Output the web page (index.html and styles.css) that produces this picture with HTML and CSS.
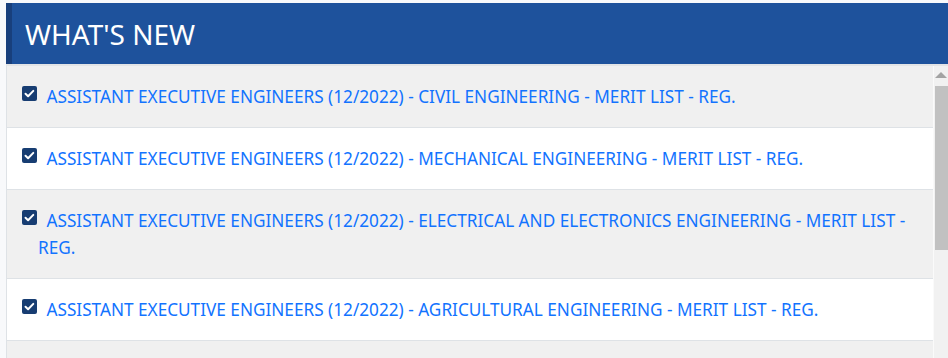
FILE: index.html
```html
<!DOCTYPE html>
<html>
<head>
    <meta charset="UTF-8">
    <title>What's New</title>
    <link rel="stylesheet" href="styles.css">
</head>
<body>
<div id="news">
    <div class="head"><h2>WHAT'S NEW</h2></div>
    <div class="body">
        <ul class="list">
            <li><a href="#"><svg class="chk" viewBox="0 0 15 15"><rect width="15" height="15" rx="2"/><path d="M3.5 7.8l2.6 2.5 5.2-5.4"/></svg> ASSISTANT EXECUTIVE ENGINEERS (12/2022) - CIVIL ENGINEERING - MERIT LIST - REG.</a></li>
            <li><a href="#"><svg class="chk" viewBox="0 0 15 15"><rect width="15" height="15" rx="2"/><path d="M3.5 7.8l2.6 2.5 5.2-5.4"/></svg> ASSISTANT EXECUTIVE ENGINEERS (12/2022) - MECHANICAL ENGINEERING - MERIT LIST - REG.</a></li>
            <li><a href="#"><svg class="chk" viewBox="0 0 15 15"><rect width="15" height="15" rx="2"/><path d="M3.5 7.8l2.6 2.5 5.2-5.4"/></svg> ASSISTANT EXECUTIVE ENGINEERS (12/2022) - ELECTRICAL AND ELECTRONICS ENGINEERING - MERIT LIST - REG.</a></li>
            <li><a href="#"><svg class="chk" viewBox="0 0 15 15"><rect width="15" height="15" rx="2"/><path d="M3.5 7.8l2.6 2.5 5.2-5.4"/></svg> ASSISTANT EXECUTIVE ENGINEERS (12/2022) - AGRICULTURAL ENGINEERING - MERIT LIST - REG.</a></li>
            <li><a href="#"><svg class="chk" viewBox="0 0 15 15"><rect width="15" height="15" rx="2"/><path d="M3.5 7.8l2.6 2.5 5.2-5.4"/></svg> ASSISTANT EXECUTIVE ENGINEERS (12/2022) - MERIT LIST - REG.</a></li>
        </ul>
        <div class="bar">
            <span class="up"></span>
            <span class="thumb"></span>
        </div>
    </div>
</div>
</body>
</html>
```
FILE: styles.css
```css
*{ margin:0; padding:0; box-sizing:border-box;}
html,body{ height:100%; overflow:hidden;}
body{
    background:#f8f9fb;
    font-family:"Noto Sans","Open Sans",sans-serif;
}
li{ list-style-type:none;}
a{ text-decoration:none;}

#news{
    margin:3px 0 0 6px;
    display:flex;
    flex-direction:column;
    height:calc(100% - 3px);
}
#news .head{
    height:61px;
    display:flex;
    align-items:center;
    background:#1e529c;
    border-left:6px solid #183f7c;
    padding-left:13px;
}
#news .head h2{
    color:#fff;
    font-size:28px;
    font-weight:400;
}
#news .body{
    flex:1;
    display:flex;
    min-height:0;
    border-top:2px solid #e3e4e6;
    border-left:1px solid #dee2e6;
}
#news .list{
    flex:1;
    overflow:hidden;
}
#news .list li{
    padding:17px 20px 17px 31px;
    line-height:27px;
    font-size:17.2px;
    border-bottom:1px solid #dee2e6;
    background:#fff;
}
#news .list li:nth-child(odd){
    background:#f0f0f0;
}
#news .list li a{
    color:#1273ff;
}
#news .list .chk{
    width:15px;
    height:15px;
    margin:0 5px 0 -16px;
    vertical-align:2px;
}
#news .list .chk rect{ fill:#173d72;}
#news .list .chk path{
    fill:none;
    stroke:#fff;
    stroke-width:2;
    stroke-linecap:round;
    stroke-linejoin:round;
}

#news .bar{
    width:15px;
    background:#f1f1f1;
    border-left:1px solid #fafafa;
    display:flex;
    flex-direction:column;
    align-items:center;
}
#news .bar .up{
    margin-top:6px;
    width:0;
    height:0;
    border-left:6px solid transparent;
    border-right:6px solid transparent;
    border-bottom:6px solid #a3a3a3;
}
#news .bar .thumb{
    margin-top:8px;
    width:13px;
    height:164px;
    background:#c1c1c1;
}
```
